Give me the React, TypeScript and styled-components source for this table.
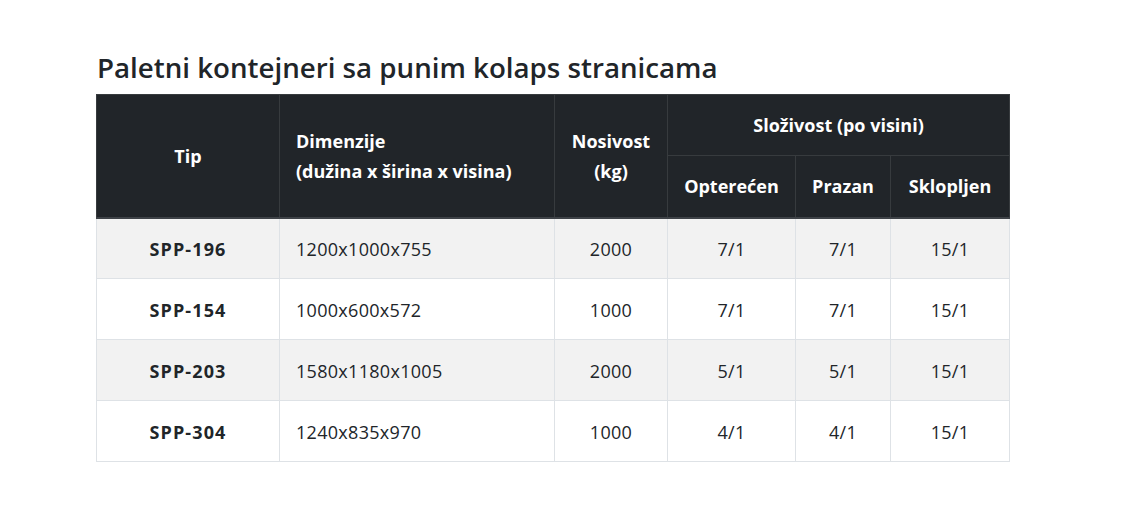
import React from "react";
import styled, { createGlobalStyle } from "styled-components";

const Global = createGlobalStyle`
  html, body { margin: 0; padding: 0; background: #fff; }
  body { font-family: "Open Sans", "Noto Sans", sans-serif; color: #212529; }
`;

const Page = styled.div`
  padding: 50px 0 0 96px;
  width: 913px;
`;

const Title = styled.h2`
  margin: 0 0 9px 1px;
  font-size: 27.7px;
  font-weight: 600;
  line-height: 35px;
  color: #212529;
`;

const Table = styled.table`
  width: 913px;
  border-collapse: collapse;
  table-layout: fixed;
  font-size: 18px;
`;

const HeadCell = styled.th<{ $align?: string; $h?: number }>`
  background: #212529;
  color: #fff;
  font-weight: 700;
  border: 1px solid #373b3e;
  text-align: ${(p) => p.$align || "center"};
  padding: 0 16px;
  height: ${(p) => p.$h || 61}px;
  line-height: 30px;
  vertical-align: middle;
  box-sizing: border-box;
  white-space: nowrap;
`;

const Head = styled.thead`
  border-bottom: 2px solid #3e4247;
`;

const Row = styled.tr<{ $striped: boolean }>`
  background: ${(p) => (p.$striped ? "#f2f2f2" : "#fff")};
`;

const Cell = styled.td<{ $align?: string; $bold?: boolean }>`
  border: 1px solid #dee2e6;
  height: 61px;
  padding: 1px 16px 0;
  box-sizing: border-box;
  text-align: ${(p) => p.$align || "center"};
  font-weight: ${(p) => (p.$bold ? 700 : 400)};
  letter-spacing: ${(p) => (p.$bold ? "1.1px" : "0.3px")};
  color: #212529;
  vertical-align: middle;
`;

const rows = [
  ["SPP-196", "1200x1000x755", "2000", "7/1", "7/1", "15/1"],
  ["SPP-154", "1000x600x572", "1000", "7/1", "7/1", "15/1"],
  ["SPP-203", "1580x1180x1005", "2000", "5/1", "5/1", "15/1"],
  ["SPP-304", "1240x835x970", "1000", "4/1", "4/1", "15/1"],
];

export default function App() {
  return (
    <>
      <Global />
      <Page>
        <Title>Paletni kontejneri sa punim kolaps stranicama</Title>
        <Table>
          <colgroup>
            <col style={{ width: 183 }} />
            <col style={{ width: 275 }} />
            <col style={{ width: 113 }} />
            <col style={{ width: 128 }} />
            <col style={{ width: 95 }} />
            <col style={{ width: 119 }} />
          </colgroup>
          <Head>
            <tr>
              <HeadCell rowSpan={2}>Tip</HeadCell>
              <HeadCell rowSpan={2} $align="left">
                Dimenzije
                <br />
                (dužina x širina x visina)
              </HeadCell>
              <HeadCell rowSpan={2}>
                Nosivost
                <br />
                (kg)
              </HeadCell>
              <HeadCell colSpan={3}>Složivost (po visini)</HeadCell>
            </tr>
            <tr>
              <HeadCell $h={62}>Opterećen</HeadCell>
              <HeadCell $h={62}>Prazan</HeadCell>
              <HeadCell $h={62}>Sklopljen</HeadCell>
            </tr>
          </Head>
          <tbody>
            {rows.map((r, i) => (
              <Row key={r[0]} $striped={i % 2 === 0}>
                <Cell $bold>{r[0]}</Cell>
                <Cell $align="left">{r[1]}</Cell>
                <Cell>{r[2]}</Cell>
                <Cell>{r[3]}</Cell>
                <Cell>{r[4]}</Cell>
                <Cell>{r[5]}</Cell>
              </Row>
            ))}
          </tbody>
        </Table>
      </Page>
    </>
  );
}
